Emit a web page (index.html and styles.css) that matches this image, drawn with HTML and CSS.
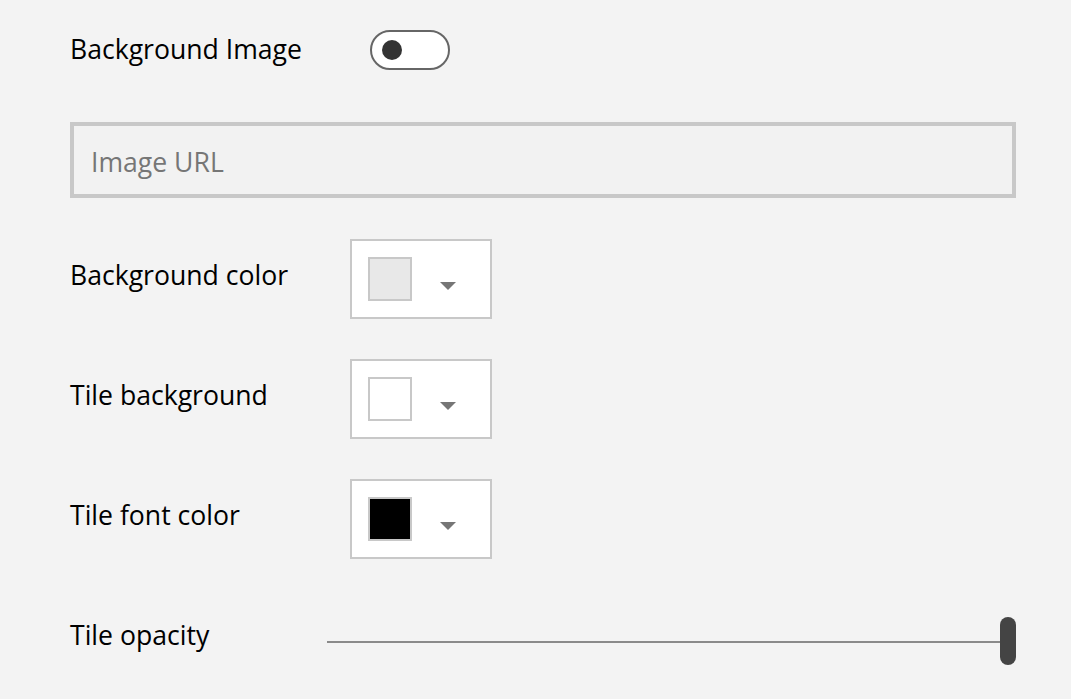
FILE: index.html
```html
<!DOCTYPE html>
<html>
<head>
<meta charset="utf-8">
<link rel="stylesheet" href="styles.css">
</head>
<body>
<div class="panel">
  <div class="row row-toggle">
    <span class="label label-toggle">Background Image</span>
    <span class="toggle"><span class="knob"></span></span>
  </div>
  <div class="url-field"><span class="placeholder">Image URL</span></div>
  <div class="colors">
    <div class="row">
      <span class="label label-color">Background color</span>
      <button class="picker"><span class="swatch swatch-bg"></span><span class="caret"></span></button>
    </div>
    <div class="row">
      <span class="label label-color">Tile background</span>
      <button class="picker"><span class="swatch swatch-tile"></span><span class="caret"></span></button>
    </div>
    <div class="row">
      <span class="label label-color">Tile font color</span>
      <button class="picker"><span class="swatch swatch-font"></span><span class="caret"></span></button>
    </div>
  </div>
  <div class="row row-slider">
    <span class="label label-slider">Tile opacity</span>
    <div class="slider"><span class="track"></span><span class="thumb"></span></div>
  </div>
</div>
</body>
</html>
```
FILE: styles.css
```css
html, body {
  margin: 0;
  padding: 0;
  background: #f3f3f3;
}
body {
  font-family: "Open Sans", "Noto Sans", sans-serif;
  color: #000;
}
.panel {
  padding: 30px 55px 0 70px;
}
.row {
  display: flex;
  align-items: center;
}
.label {
  font-size: 26.6px;
  line-height: 32px;
  flex: none;
}
.row-toggle {
  height: 40px;
}
.label-toggle {
  width: 300px;
  margin-bottom: 2px;
}
.toggle {
  width: 80px;
  height: 40px;
  box-sizing: border-box;
  border: 2px solid #666;
  border-radius: 20px;
  background: #fff;
  display: flex;
  align-items: center;
  padding-left: 10px;
}
.knob {
  width: 20px;
  height: 20px;
  border-radius: 50%;
  background: #333;
}
.url-field {
  margin-top: 52px;
  height: 76px;
  box-sizing: border-box;
  border: 4px solid #c8c8c8;
  background: #f2f2f2;
  display: flex;
  align-items: center;
  padding-left: 17px;
}
.placeholder {
  font-size: 26.6px;
  color: #767676;
  margin-top: 4px;
}
.colors {
  margin-top: 41px;
  display: flex;
  flex-direction: column;
  gap: 40px;
}
.label-color {
  width: 280px;
  margin-bottom: 8px;
}
.picker {
  width: 142px;
  height: 80px;
  box-sizing: border-box;
  border: 2px solid #c8c8c8;
  background: #fff;
  padding: 0 0 0 16px;
  display: flex;
  align-items: center;
  margin: 0;
}
.swatch {
  width: 44px;
  height: 44px;
  box-sizing: border-box;
  border: 2px solid #c8c8c8;
}
.swatch-bg { background: #e8e8e8; }
.swatch-tile { background: #ffffff; }
.swatch-font { background: #000000; }
.caret {
  margin-left: 28px;
  margin-top: 14px;
  width: 0;
  height: 0;
  border-left: 8px solid transparent;
  border-right: 8px solid transparent;
  border-top: 8px solid #767676;
}
.row-slider {
  margin-top: 58px;
  height: 48px;
}
.label-slider {
  width: 257px;
  margin-bottom: 12px;
}
.slider {
  flex: 1;
  height: 48px;
  display: flex;
  align-items: center;
}
.track {
  flex: 1;
  height: 2px;
  margin-top: 2px;
  background: #8a8a8a;
}
.thumb {
  width: 16px;
  height: 48px;
  border-radius: 8px;
  background: #444;
}
```
